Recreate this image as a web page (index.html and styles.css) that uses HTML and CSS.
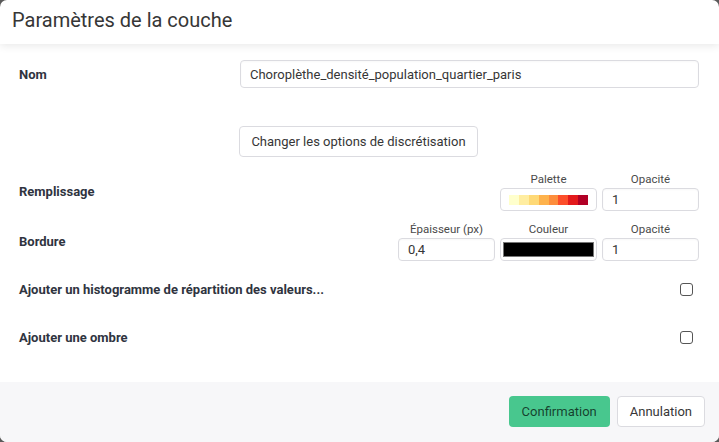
FILE: index.html
```html
<!DOCTYPE html>
<html lang="fr">
<head>
<meta charset="utf-8">
<title>Paramètres de la couche</title>
<link rel="stylesheet" href="styles.css">
</head>
<body>
<div class="modal">
  <header class="modal-head">Paramètres de la couche</header>
  <section class="modal-body">
    <div class="row row-nom">
      <div class="label">Nom</div>
      <input class="input wide" type="text" value="Choroplèthe_densité_population_quartier_paris">
    </div>
    <div class="row row-btn">
      <div class="label"></div>
      <button class="button">Changer les options de discrétisation</button>
    </div>
    <div class="row row-multi">
      <div class="label">Remplissage</div>
      <div class="cols">
        <div class="col">
          <div class="col-title">Palette</div>
          <div class="box palette">
            <span class="sw" style="background:#ffffcc"></span>
            <span class="sw" style="background:#ffeda0"></span>
            <span class="sw" style="background:#fed976"></span>
            <span class="sw" style="background:#feb24c"></span>
            <span class="sw" style="background:#fd8d3c"></span>
            <span class="sw" style="background:#fc4e2a"></span>
            <span class="sw" style="background:#e31a1c"></span>
            <span class="sw" style="background:#b10026"></span>
          </div>
        </div>
        <div class="col">
          <div class="col-title">Opacité</div>
          <input class="input small" type="text" value="1">
        </div>
      </div>
    </div>
    <div class="row row-multi row-border">
      <div class="label">Bordure</div>
      <div class="cols">
        <div class="col">
          <div class="col-title">Épaisseur (px)</div>
          <input class="input small" type="text" value="0,4">
        </div>
        <div class="col">
          <div class="col-title">Couleur</div>
          <div class="box color"><span class="color-fill"></span></div>
        </div>
        <div class="col">
          <div class="col-title">Opacité</div>
          <input class="input small" type="text" value="1">
        </div>
      </div>
    </div>
    <div class="row row-check">
      <div class="label">Ajouter un histogramme de répartition des valeurs...</div>
      <span class="checkbox"></span>
    </div>
    <div class="row row-check">
      <div class="label">Ajouter une ombre</div>
      <span class="checkbox"></span>
    </div>
  </section>
  <footer class="modal-foot">
    <button class="button success">Confirmation</button>
    <button class="button">Annulation</button>
  </footer>
</div>
</body>
</html>
```

FILE: styles.css
```css
* { box-sizing: border-box; }
html, body { margin: 0; padding: 0; }
body {
  background: #5a5a5a;
  font-family: Roboto, "Noto Sans", sans-serif;
  color: #4a4a4a;
  width: 719px;
  height: 442px;
  overflow: hidden;
}
.modal {
  width: 719px;
  height: 442px;
  background: #fff;
  border-radius: 7px;
  overflow: hidden;
  display: flex;
  flex-direction: column;
}
.modal-head {
  height: 44px;
  flex: none;
  padding: 0 12px;
  display: flex;
  align-items: center;
  font-size: 20px;
  color: #363636;
  box-shadow: 0 2px 8px rgba(0,0,0,0.09);
  position: relative;
  z-index: 1;
  padding-bottom: 4px;
}
.modal-body {
  flex: 1;
  padding: 16px 20px 0 19px;
  display: flex;
  flex-direction: column;
}
.row {
  display: flex;
  align-items: center;
}
.label {
  font-weight: 700;
  font-size: 13px;
  color: #2f3440;
  flex: 1;
}
.row-nom .label, .row-btn .label { flex: 0 0 221px; }
.input {
  font-family: inherit;
  font-size: 13px;
  color: #363636;
  border: 1px solid #dbdbe0;
  border-radius: 4px;
  background: #fff;
  outline: none;
  box-shadow: inset 0 1px 2px rgba(10,10,10,0.03);
}
.wide {
  width: 459px;
  height: 28px;
  padding: 0 9px;
}
.row-btn { margin-top: 38px; }
.button {
  font-family: inherit;
  font-size: 13px;
  color: #363636;
  background: #fff;
  border: 1px solid #dbdbe0;
  border-radius: 4px;
  height: 31px;
  padding: 0 12px;
  cursor: pointer;
  white-space: nowrap;
}
.row-btn .button { margin-left: -1px; width: 239px; padding: 0; }
.row-multi { margin-top: 15px; }
.row-border { margin-top: 11px; }
.cols {
  display: flex;
  gap: 5px;
}
.col {
  width: 97px;
  display: flex;
  flex-direction: column;
  align-items: stretch;
}
.col-title {
  font-size: 11.5px;
  text-align: center;
  color: #4a4a4a;
  height: 16px;
  line-height: 14px;
}
.small {
  width: 97px;
  height: 23px;
  padding: 0 9px;
}
.box {
  width: 97px;
  height: 23px;
  border: 1px solid #dbdbe0;
  border-radius: 4px;
  background: #fff;
  display: flex;
  align-items: center;
}
.palette {
  justify-content: center;
}
.sw {
  width: 9.8px;
  height: 10px;
  display: block;
}
.color { padding: 0 2px; }
.color-fill {
  display: block;
  width: 100%;
  height: 15px;
  background: #000;
  border: 1px solid #777;
}
.row-check {
  margin-top: 16px;
  height: 24px;
  padding-right: 6px;
}
.row-check + .row-check { margin-top: 24px; }
.checkbox {
  width: 13px;
  height: 13px;
  border: 1px solid #555;
  border-radius: 3px;
  background: #fff;
  display: block;
}
.modal-foot {
  height: 60px;
  flex: none;
  background: #f7f7f9;
  display: flex;
  justify-content: flex-end;
  align-items: center;
  gap: 7px;
  padding: 0 14px 1px 0;
}
.modal-foot .button { padding: 0 12px; }
.button.success {
  background: #48c78e;
  border-color: transparent;
  color: rgba(0,0,0,0.7);
}
```
